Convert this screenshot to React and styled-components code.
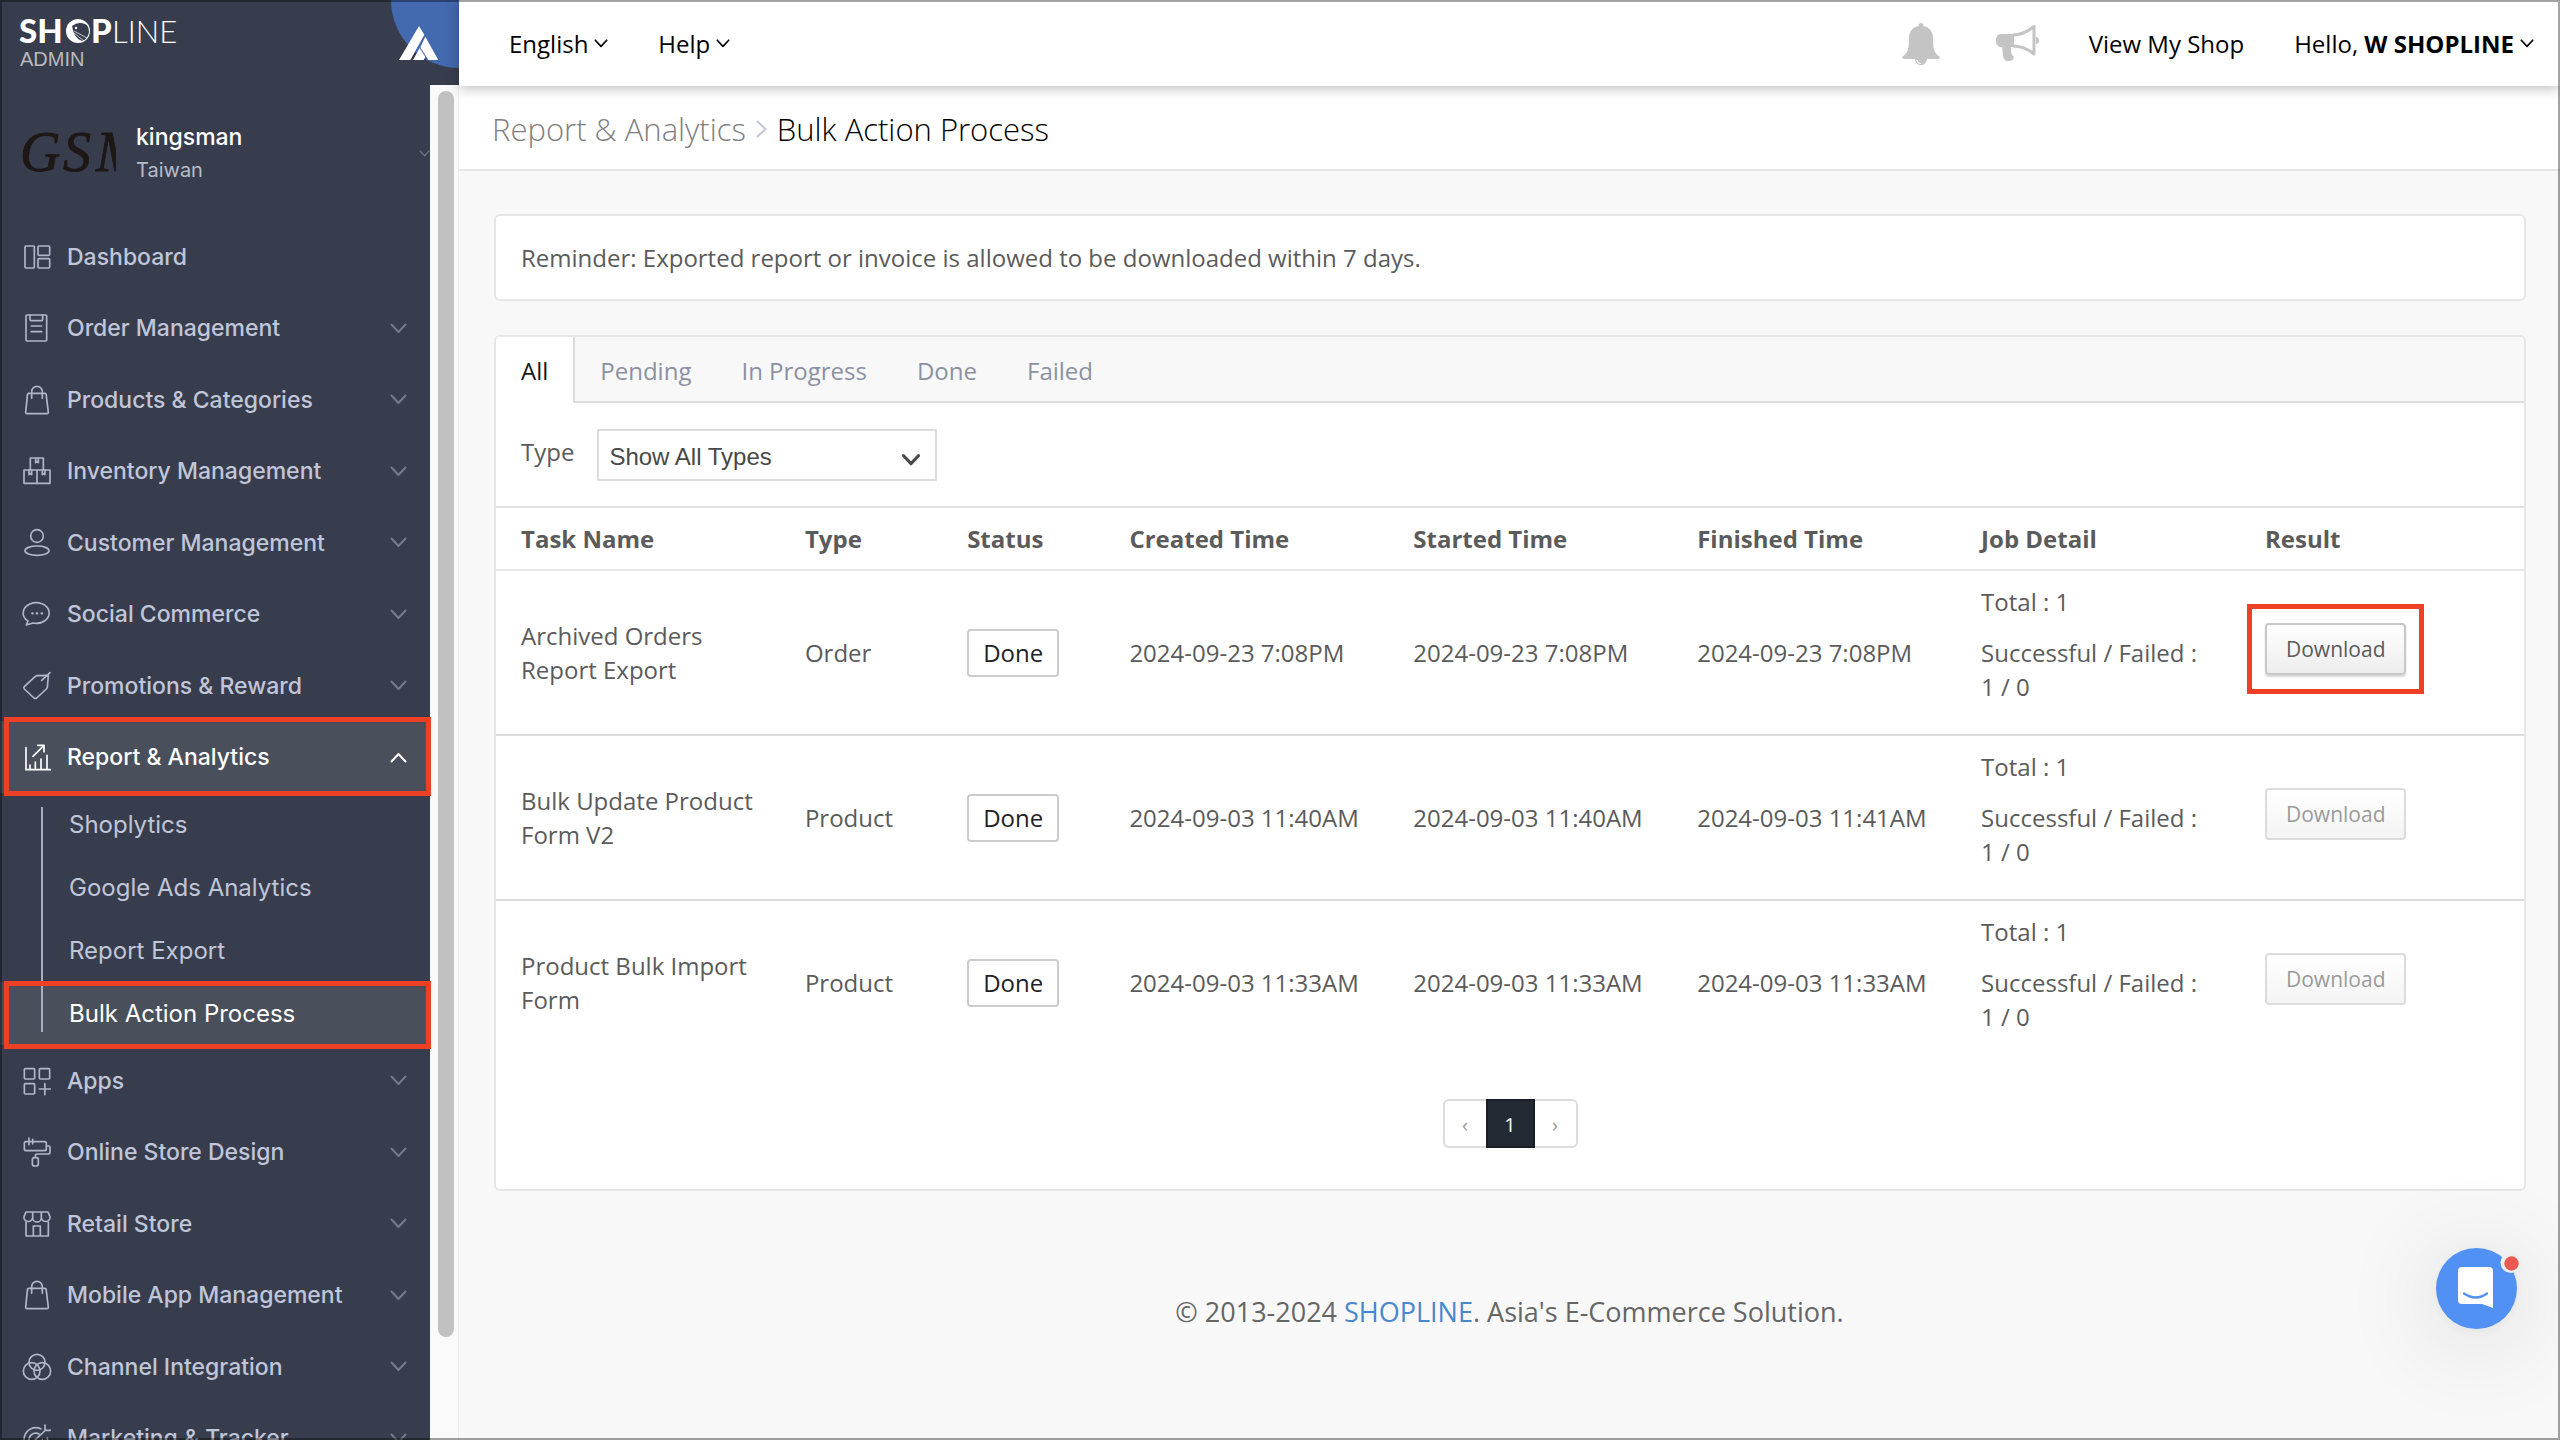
import React, { useState } from "react";
import styled, { createGlobalStyle, css } from "styled-components";

const GlobalStyle = createGlobalStyle`
    * {
        box-sizing: border-box;
    }

    body {
        margin: 0;
        background: #f8f8f8;
        color: #5b5b5b;
        font-family: "Open Sans", sans-serif;
        font-size: 24px;
        line-height: 34px;
    }

    button, select {
        font: inherit;
        color: inherit;
    }

    a {
        color: inherit;
        text-decoration: none;
    }
`

const StyledPage = styled.div`
    display: flex;
    height: 100vh;
    overflow: hidden;
`

const StyledFrame = styled.div`
    position: fixed;
    inset: 0;
    z-index: 20;
    border: 2px solid rgba(0, 0, 0, 0.36);
    pointer-events: none;
`

/* Sidebar */

const StyledSidebar = styled.aside`
    display: flex;
    flex-direction: column;
    flex: 0 0 459px;
    background-color: #383d4d;
    font-family: Inter, sans-serif;
`

const StyledBrand = styled.div`
    display: flex;
    justify-content: space-between;
    flex: 0 0 85px;
    padding-left: 20px;
`

const StyledBrandName = styled.a`
    display: block;
    padding-top: 8px;
`

const StyledLogo = styled.svg`
    display: block;
    overflow: visible;
`

const StyledAdmin = styled.span`
    display: block;
    color: #b9babd;
    font-family: "Liberation Sans", sans-serif;
    font-size: 20px;
    line-height: 20px;
`

const StyledSidebarBody = styled.div`
    display: flex;
    flex: 1;
    min-height: 0;
`

const StyledSidebarScroll = styled.div`
    flex: 1;
    min-width: 0;
`

const StyledTrack = styled.div`
    display: flex;
    flex: 0 0 29px;
    padding: 6px 4px 103px 8px;
    background-color: #fafafa;
    border-right: 1px solid #ececec;
`

const StyledThumb = styled.div`
    flex: 1;
    border-radius: 8px;
    background-color: #c1c1c1;
`

const StyledProfile = styled.button`
    display: flex;
    align-items: center;
    width: 100%;
    height: 136px;
    padding: 0 0 0 20px;
    border: none;
    background: none;
    color: #fff;
    text-align: left;
    white-space: nowrap;
    cursor: pointer;
`

const StyledProfileText = styled.span`
    display: flex;
    flex-direction: column;
    flex: 1;
    margin-left: 20px;
`

const StyledShopName = styled.span`
    font-size: 23px;
    font-weight: 500;
    line-height: 34px;
`

const StyledRegion = styled.span`
    color: #b6bbc8;
    font-size: 20px;
    font-weight: 400;
    line-height: 32px;
`

const StyledProfileArrow = styled.span`
    display: flex;
    width: 11px;
    overflow: hidden;
    color: #6f778d;
`

const StyledMenu = styled.ul`
    margin: 0;
    padding: 0;
    list-style: none;
`

const highlight = css`
    &::after {
        content: "";
        position: absolute;
        inset: ${props => props.$inset || "-4px -1px -3px 4px"};
        z-index: 5;
        border: 5px solid #ee4025;
        pointer-events: none;
    }
`

const StyledMenuLink = styled.a`
    position: relative;
    display: flex;
    align-items: center;
    height: 71px;
    padding: 0 23px;
    color: ${props => props.$active ? "#fff" : "#c0c6d9"};
    background-color: ${props => props.$active ? "#4a4f5c" : "transparent"};
    font-size: 23px;
    font-weight: 500;
    white-space: nowrap;

    ${props => props.$active && highlight}

    li:nth-child(even) > & {
        height: 72px;
    }
`

const StyledMenuIcon = styled.svg`
    flex: none;
    width: 28px;
    height: 28px;
    margin-right: 16px;
    overflow: visible;
    fill: none;
    stroke: ${props => props.$active ? "#fff" : "#b1b7c7"};
    stroke-width: 5;
    stroke-linecap: round;
    stroke-linejoin: round;
`

const StyledMenuLabel = styled.span`
    flex: 1;
`

const StyledMenuArrow = styled.span`
    display: flex;
    color: ${props => props.$active ? "#fff" : "#737b91"};
`

const StyledSubMenu = styled.ul`
    position: relative;
    margin: 0;
    padding: 0;
    list-style: none;

    &::before {
        content: "";
        position: absolute;
        top: 14px;
        bottom: 13px;
        left: 41px;
        z-index: 1;
        width: 2px;
        background-color: #a9aebd;
    }
`

const StyledSubLink = styled.a`
    position: relative;
    display: block;
    padding-left: 69px;
    color: ${props => props.$active ? "#fff" : "#c0c6d9"};
    background-color: ${props => props.$active ? "#4a4f5c" : "transparent"};
    line-height: 63px;

    ${props => props.$active && highlight}
`

/* Top bar */

const StyledMain = styled.main`
    display: flex;
    flex-direction: column;
    flex: 1;
    min-width: 0;
`

const StyledTopBar = styled.header`
    position: relative;
    z-index: 2;
    display: flex;
    align-items: center;
    flex: 0 0 86px;
    padding: 1px 26px 0 50px;
    background-color: #fff;
    box-shadow: 0 2px 12px rgba(0, 0, 0, 0.28);
    color: #000;
`

const StyledTopGroup = styled.nav`
    display: flex;
    align-items: center;
    gap: 50px;
    margin-left: ${props => props.$end ? "auto" : "0"};
`

const StyledTopItem = styled.button`
    display: flex;
    align-items: center;
    gap: 6px;
    padding: 0;
    border: none;
    background: none;
    white-space: nowrap;
    cursor: pointer;
`

const StyledIconItem = styled(StyledTopItem)`
    margin-right: ${props => props.$space || "0"};
    color: #c4c4c4;
`

/* Content */

const StyledBreadcrumb = styled.div`
    display: flex;
    align-items: center;
    flex: 0 0 85px;
    gap: 10px;
    padding: 2px 33px 0;
    border-bottom: 2px solid #e6e6e6;
    background-color: #fff;
    color: #808080;
    font-size: 31px;
    font-weight: 300;
`

const StyledCurrent = styled.h1`
    margin: 0;
    color: #000;
    font-size: 31px;
    font-weight: 300;
    line-height: 34px;
`

const StyledContent = styled.div`
    display: flex;
    flex-direction: column;
    gap: 34px;
    padding: 43px 34px 0 35px;
`

const StyledCard = styled.section`
    border: 2px solid #e6e6e6;
    border-radius: 6px;
    background-color: #fff;
    overflow: hidden;
`

const StyledReminder = styled.p`
    margin: 0;
    padding: 25px 25px 24px;
`

const StyledTabs = styled.div`
    display: flex;
    background-color: #f8f8f8;
    box-shadow: inset 0 -2px #dcdcdc;
`

const StyledTab = styled.button`
    height: 66px;
    padding: 1px 25px 0;
    border: none;
    border-right: ${props => props.$active ? "2px solid #dcdcdc" : "none"};
    background-color: ${props => props.$active ? "#fff" : "transparent"};
    color: ${props => props.$active ? "#16181d" : "#8b91a3"};
    cursor: pointer;
`

const StyledFilter = styled.div`
    display: flex;
    gap: 23px;
    padding: 26px 25px 25px;
    border-bottom: 2px solid #e2e2e2;
`

const StyledFilterLabel = styled.label`
    padding-top: 6px;
`

const StyledSelectWrapper = styled.div`
    position: relative;
    width: 340px;
`

const StyledSelect = styled.select`
    display: block;
    width: 100%;
    height: 52px;
    padding: 4px 40px 0 10px;
    border: 2px solid #dcdcdc;
    border-radius: 0;
    background-color: #fff;
    color: #484848;
    font-family: "Liberation Sans", sans-serif;
    font-size: 24px;
    line-height: 34px;
    appearance: none;
`

const StyledSelectArrow = styled.span`
    position: absolute;
    top: 25px;
    right: 17px;
    display: flex;
    color: #4a4a4a;
    pointer-events: none;
`

const StyledTable = styled.table`
    width: 100%;
    border-collapse: collapse;
    table-layout: fixed;
`

const StyledTh = styled.th`
    width: ${props => props.$width};
    padding: 14px 25px 13px;
    border-bottom: 2px solid #e6e6e6;
    font-weight: 700;
    text-align: left;
`

const StyledTd = styled.td`
    padding: 14px 25px 13px;
    white-space: ${props => props.$nowrap ? "nowrap" : "normal"};

    tr + tr > & {
        border-top: 2px solid #dcdcdc;
    }
`

const StyledDetail = styled.p`
    margin: 0 0 17px;
`

const StyledStatus = styled.span`
    display: inline-block;
    padding: 5px 14px;
    border: 2px solid #cccccc;
    border-radius: 4px;
    color: #1f2226;
`

const StyledResult = styled.div`
    position: relative;
    width: fit-content;
    margin-bottom: 8px;

    ${props => props.$marked && highlight}
`

const StyledDownload = styled.button`
    display: block;
    height: 52px;
    padding: 0 19px;
    border: 2px solid #c8c8c8;
    border-radius: 4px;
    background: linear-gradient(#fff, #ededed);
    box-shadow: 0 2px 2px rgba(0, 0, 0, 0.16);
    font-size: 21px;
    cursor: pointer;

    &:disabled {
        border-color: #dcdcdc;
        background: linear-gradient(#fff, #f4f4f4);
        box-shadow: none;
        color: #9b9b9b;
        cursor: default;
    }
`

const StyledPagination = styled.nav`
    display: flex;
    justify-content: center;
    padding: 35px 0 41px;
`

const StyledPageButton = styled.button`
    width: ${props => props.$active ? "49px" : "43px"};
    height: 49px;
    padding: 2px 0 0;
    border: 2px solid ${props => props.$active ? "#1a1f27" : "#dcdcdc"};
    border-radius: 0;
    background-color: ${props => props.$active ? "#232a33" : "#fff"};
    color: ${props => props.$active ? "#fff" : "#999"};
    font-size: 20px;

    &:first-child {
        border-right: none;
        border-radius: 6px 0 0 6px;
    }

    &:last-child {
        border-left: none;
        border-radius: 0 6px 6px 0;
    }
`

const StyledFooter = styled.footer`
    padding-top: 104px;
    color: #666;
    font-size: 27px;
    text-align: center;

    a {
        color: #4a87cf;
    }
`

const StyledChat = styled.button`
    position: fixed;
    right: 43px;
    bottom: 111px;
    z-index: 10;
    width: 81px;
    height: 81px;
    padding: 0;
    border: none;
    border-radius: 50%;
    background-color: #5191f3;
    box-shadow: 0 2px 12px rgba(0, 0, 0, 0.05), 0 10px 100px rgba(0, 0, 0, 0.16);
    cursor: pointer;
`

const ICONS = {
    dashboard: <><rect x="6" y="9" width="28" height="66" rx="3" /><rect x="45" y="9" width="35" height="28" rx="3" /><rect x="45" y="47" width="35" height="28" rx="3" /></>,
    order: <><rect x="9" y="3" width="62" height="78" rx="3" /><path d="M21 4v12q0 4 4 4h30q4 0 4-4V4M25 36h31M25 53h31" /></>,
    bag: <><path d="M17 22h49q3 0 3.500 3l6.500 54q0 4-4 4H12q-4 0-4-4l5.500-54q.5-3 3.500-3z" /><path d="M26 37V17a16 16 0 0 1 32 0v20" /></>,
    boxes: <><path d="M22 38V3h39v35M3 39h78v40H3zM42 39v40" /><path d="M38 4v13l4-3 4 3V4M18 40v13l4-3 4 3V40M58 40v13l4-3 4 3V40" /></>,
    customer: <><circle cx="42" cy="21" r="19" /><ellipse cx="42" cy="65" rx="36" ry="14" /></>,
    social: <><path d="M15 63A39 31 0 1 1 30 69L10 75z" /><path d="M28 40h1M41.500 40h1M56 40h1" strokeWidth="7" /></>,
    tag: <><path d="M36 14l5-3 35-1-3 36-3 5-29 27q-4 3-8 0L4 51q-3-4 0-7z" /><path d="M81 2L56 25" /></>,
    report: <><path d="M9 14v66h73" /><path d="M21 66v12M37 57v21M54 48v30M72 37v41M30 40L62 8M44 7h19v20" /></>,
    apps: <><rect x="4" y="5" width="31" height="31" rx="3" /><rect x="49" y="5" width="31" height="31" rx="3" /><rect x="4" y="50" width="31" height="31" rx="3" /><path d="M49 66h33M65.500 50v33" /></>,
    roller: <><rect x="4" y="11" width="66" height="27" rx="5" /><path d="M70 24h7q4 0 4 4v15q0 5-5 5H42q-5 0-5 5v5" /><rect x="28" y="59" width="18" height="25" rx="6" /><path d="M18 0v20M29 4v14" /></>,
    store: <><path d="M9 6h66l6 14a13 13 0 0 1-26 3 13 13 0 0 1-26 0A13 13 0 0 1 3 20zM29 6v17M55 6v17" /><path d="M9 36v42h67V36M31 78V48h21v30" /></>,
    channel: <><circle cx="42" cy="28" r="24" /><circle cx="26" cy="54" r="25" /><circle cx="58" cy="54" r="25" /></>,
    target: <><path d="M54 15A35 35 0 1 0 73 42M48 30a20 20 0 1 0 10 16M36 48l32-30M66 3v16h16" /></>,
}

const MENU = [
    { label: "Dashboard", icon: "dashboard", leaf: true },
    { label: "Order Management", icon: "order" },
    { label: "Products & Categories", icon: "bag" },
    { label: "Inventory Management", icon: "boxes" },
    { label: "Customer Management", icon: "customer" },
    { label: "Social Commerce", icon: "social" },
    { label: "Promotions & Reward", icon: "tag" },
    { label: "Report & Analytics", icon: "report", active: true, children: ["Shoplytics", "Google Ads Analytics", "Report Export", "Bulk Action Process"] },
    { label: "Apps", icon: "apps" },
    { label: "Online Store Design", icon: "roller" },
    { label: "Retail Store", icon: "store" },
    { label: "Mobile App Management", icon: "bag" },
    { label: "Channel Integration", icon: "channel" },
    { label: "Marketing & Tracker", icon: "target" },
]

const TABS = ["All", "Pending", "In Progress", "Done", "Failed"]

const COLUMNS = [
    ["Task Name", "14%"],
    ["Type", "8%"],
    ["Status", "8%"],
    ["Created Time", "14%"],
    ["Started Time", "14%"],
    ["Finished Time", "14%"],
    ["Job Detail", "14%"],
    ["Result", "14%"],
]

const TASKS = [
    { name: "Archived Orders Report Export", type: "Order", created: "2024-09-23 7:08PM", started: "2024-09-23 7:08PM", finished: "2024-09-23 7:08PM", available: true },
    { name: "Bulk Update Product Form V2", type: "Product", created: "2024-09-03 11:40AM", started: "2024-09-03 11:40AM", finished: "2024-09-03 11:41AM" },
    { name: "Product Bulk Import Form", type: "Product", created: "2024-09-03 11:33AM", started: "2024-09-03 11:33AM", finished: "2024-09-03 11:33AM" },
]

const Chevron = ({ width = 17, up, stroke = 2 }) => (
    <svg width={width} height={Math.round(width * 0.65)} viewBox="0 0 17 11" fill="none" stroke="currentColor" strokeWidth={stroke} strokeLinecap="round" strokeLinejoin="round" aria-hidden="true">
        <path d={up ? "M1.500 9.500L8.500 2L15.500 9.500" : "M1.500 1.500L8.500 9L15.500 1.500"} />
    </svg>
)

const Logo = () => (
    <StyledLogo width="160" height="41" viewBox="0 0 160 41" fill="#fff" role="img" aria-label="SHOPLINE">
        <g fontFamily="Lato, sans-serif">
            <text x="-1" y="35" fontWeight="900" fontSize="33">SH</text>
            <text x="71" y="35" fontWeight="900" fontSize="33">P</text>
            <text x="92" y="35" fontWeight="300" fontSize="31">LINE</text>
        </g>
        <circle cx="58" cy="23" r="12" />
        <path d="M52 18q6-5 13-2 4 2 4 8-1 7-7 9-8-2-10-15z" fill="#383d4d" />
        <path d="M54 25l10 8M54 27l6 7M54 23l13 7" stroke="#fff" strokeWidth="0.700" />
        <circle cx="56" cy="20" r="1.200" />
    </StyledLogo>
)

const BrandMark = () => (
    <svg width="68" height="68" viewBox="0 0 68 68" aria-hidden="true">
        <circle cx="68" cy="0" r="68" fill="#4369ae" />
    </svg>
)

const BrandPeak = () => (
    <svg width="40" height="34" viewBox="0 0 120 102" fill="#fff" aria-hidden="true">
        <path d="M60 0L76 26L34 102H0zM79 32L118 102H88L64 64zM62 66L79 93L74 102H42z" />
    </svg>
)

const StyledMark = styled.div`
    position: relative;
    line-height: 0;

    svg + svg {
        position: absolute;
        top: 26px;
        left: 8px;
    }
`

const Avatar = () => (
    <svg width="96" height="60" viewBox="0 -6 96 60" fill="#1d1716" aria-hidden="true">
        <g fontFamily="'Liberation Serif', serif" fontStyle="italic" fontSize="56" stroke="#1d1716" strokeWidth="0.800">
            <text x="0" y="42">G</text>
            <text x="43" y="42">S</text>
            <text x="76" y="42">M</text>
        </g>
    </svg>
)

const Bell = () => (
    <svg width="38" height="42" viewBox="0 0 38 42" fill="currentColor" aria-hidden="true">
        <path d="M19 0c1.500 0 2.500 1.200 2.300 3C27 4 31 8 31 15c0 11 1 15 6.500 18.500.8 1.500 0 2.500-1.500 2.500H25c-.5 4-3 6-6 6s-5.500-2-6-6H2c-1.500 0-2.300-1-1.500-2.500C6 30 7 26 7 15 7 8 11 4 16.700 3 16.500 1.200 17.500 0 19 0z" />
        <path d="M15 37q.5 3.500 4 3.500" fill="none" stroke="#fff" strokeWidth="1.200" />
    </svg>
)

const Megaphone = () => (
    <svg width="43" height="37" viewBox="0 0 43 37" fill="none" stroke="currentColor" aria-hidden="true">
        <path d="M17 10C25 10 31 7 38 1.500V29C32 24 26 21 17 21" strokeWidth="3" strokeLinejoin="round" />
        <path d="M4 9h14v13H4q-4-1-4-6.500T4 9z" fill="currentColor" stroke="none" />
        <path d="M6 20h9c-.5 6 0 9 3 12 0 2-2 4-5 4-4 0-5-1-6-5z" fill="currentColor" stroke="none" />
        <path d="M40 12q3 0 3 3.500t-3 3.500z" fill="currentColor" stroke="none" />
    </svg>
)

const ChatIcon = () => (
    <svg width="81" height="81" viewBox="0 0 81 81" overflow="visible" aria-hidden="true">
        <path d="M26 19h27q4 0 4 4v37l-11-4H26q-4 0-4-4V23q0-4 4-4z" fill="#fff" />
        <path d="M28 45.500q12 8 23 0" fill="none" stroke="#5191f3" strokeWidth="2.400" strokeLinecap="round" />
        <circle cx="75" cy="14.500" r="10.500" fill="#efefef" />
        <circle cx="75.500" cy="15.500" r="7.200" fill="#ea5a50" />
    </svg>
)

const Sidebar = () => {

    return (
        <StyledSidebar>
            <StyledBrand>
                <StyledBrandName href="#home">
                    <Logo />
                    <StyledAdmin>ADMIN</StyledAdmin>
                </StyledBrandName>
                <StyledMark>
                    <BrandMark />
                    <BrandPeak />
                </StyledMark>
            </StyledBrand>
            <StyledSidebarBody>
                <StyledSidebarScroll>
                    <StyledProfile>
                        <Avatar />
                        <StyledProfileText>
                            <StyledShopName>kingsman</StyledShopName>
                            <StyledRegion>Taiwan</StyledRegion>
                        </StyledProfileText>
                        <StyledProfileArrow>
                            <svg width="17" height="11" viewBox="0 0 17 11" fill="none" stroke="currentColor" strokeWidth="2">
                                <path d="M1 1L8.500 9L16 1" />
                            </svg>
                        </StyledProfileArrow>
                    </StyledProfile>
                    <StyledMenu>
                        {MENU.map(item => (
                            <li key={item.label}>
                                <StyledMenuLink href="#menu" $active={item.active}>
                                    <StyledMenuIcon viewBox="0 0 84 84" $active={item.active} aria-hidden="true">
                                        {ICONS[item.icon]}
                                    </StyledMenuIcon>
                                    <StyledMenuLabel>{item.label}</StyledMenuLabel>
                                    {!item.leaf && <StyledMenuArrow $active={item.active}><Chevron up={item.active} /></StyledMenuArrow>}
                                </StyledMenuLink>
                                {item.children && (
                                    <StyledSubMenu>
                                        {item.children.map((child, i) => (
                                            <li key={child}>
                                                <StyledSubLink
                                                    href="#submenu"
                                                    $active={i === item.children.length - 1}
                                                    $inset="-1px -1px -4px 4px"
                                                >{child}</StyledSubLink>
                                            </li>
                                        ))}
                                    </StyledSubMenu>
                                )}
                            </li>
                        ))}
                    </StyledMenu>
                </StyledSidebarScroll>
                <StyledTrack>
                    <StyledThumb />
                </StyledTrack>
            </StyledSidebarBody>
        </StyledSidebar>
    )
}

const TopBar = () => (
    <StyledTopBar>
        <StyledTopGroup>
            <StyledTopItem>English<Chevron width={14} /></StyledTopItem>
            <StyledTopItem>Help<Chevron width={14} /></StyledTopItem>
        </StyledTopGroup>
        <StyledTopGroup $end>
            <StyledIconItem $space="6px" aria-label="Notifications"><Bell /></StyledIconItem>
            <StyledIconItem aria-label="Announcements"><Megaphone /></StyledIconItem>
            <StyledTopItem as="a" href="#shop">View My Shop</StyledTopItem>
            <StyledTopItem>
                <span>Hello, <b>W SHOPLINE</b></span>
                <Chevron width={14} />
            </StyledTopItem>
        </StyledTopGroup>
    </StyledTopBar>
)

const TaskRow = ({ task }) => (
    <tr>
        <StyledTd>{task.name}</StyledTd>
        <StyledTd>{task.type}</StyledTd>
        <StyledTd><StyledStatus>Done</StyledStatus></StyledTd>
        <StyledTd $nowrap>{task.created}</StyledTd>
        <StyledTd $nowrap>{task.started}</StyledTd>
        <StyledTd $nowrap>{task.finished}</StyledTd>
        <StyledTd>
            <StyledDetail>Total : 1</StyledDetail>
            <StyledDetail>Successful / Failed : 1 / 0</StyledDetail>
        </StyledTd>
        <StyledTd>
            <StyledResult $marked={task.available} $inset="-19px -18px">
                <StyledDownload disabled={!task.available}>Download</StyledDownload>
            </StyledResult>
        </StyledTd>
    </tr>
)

const App = () => {
    const [activeTab, setActiveTab] = useState("All");

    return (
        <>
            <GlobalStyle />
            <StyledPage>
                <Sidebar />
                <StyledMain>
                    <TopBar />
                    <StyledBreadcrumb>
                        <a href="#reports">Report &amp; Analytics</a>
                        <svg width="11" height="18" viewBox="0 0 11 18" fill="none" stroke="#c3c7d3" strokeWidth="2" aria-hidden="true">
                            <path d="M1 1L9.500 9L1 17" />
                        </svg>
                        <StyledCurrent>Bulk Action Process</StyledCurrent>
                    </StyledBreadcrumb>
                    <StyledContent>
                        <StyledCard>
                            <StyledReminder>Reminder: Exported report or invoice is allowed to be downloaded within 7 days.</StyledReminder>
                        </StyledCard>
                        <StyledCard>
                            <StyledTabs>
                                {TABS.map(tab => (
                                    <StyledTab key={tab} $active={tab === activeTab} onClick={() => setActiveTab(tab)}>{tab}</StyledTab>
                                ))}
                            </StyledTabs>
                            <StyledFilter>
                                <StyledFilterLabel htmlFor="task-type">Type</StyledFilterLabel>
                                <StyledSelectWrapper>
                                    <StyledSelect id="task-type">
                                        <option>Show All Types</option>
                                    </StyledSelect>
                                    <StyledSelectArrow><Chevron width={18} stroke={3} /></StyledSelectArrow>
                                </StyledSelectWrapper>
                            </StyledFilter>
                            <StyledTable>
                                <thead>
                                    <tr>
                                        {COLUMNS.map(([title, width]) => (
                                            <StyledTh key={title} $width={width}>{title}</StyledTh>
                                        ))}
                                    </tr>
                                </thead>
                                <tbody>
                                    {TASKS.map(task => <TaskRow key={task.name} task={task} />)}
                                </tbody>
                            </StyledTable>
                            <StyledPagination aria-label="Pages">
                                <StyledPageButton disabled>‹</StyledPageButton>
                                <StyledPageButton $active>1</StyledPageButton>
                                <StyledPageButton disabled>›</StyledPageButton>
                            </StyledPagination>
                        </StyledCard>
                    </StyledContent>
                    <StyledFooter>
                        © 2013-2024 <a href="#shopline">SHOPLINE</a>. Asia's E-Commerce Solution.
                    </StyledFooter>
                </StyledMain>
            </StyledPage>
            <StyledChat aria-label="Open chat"><ChatIcon /></StyledChat>
            <StyledFrame />
        </>
    )
}

export default App;
